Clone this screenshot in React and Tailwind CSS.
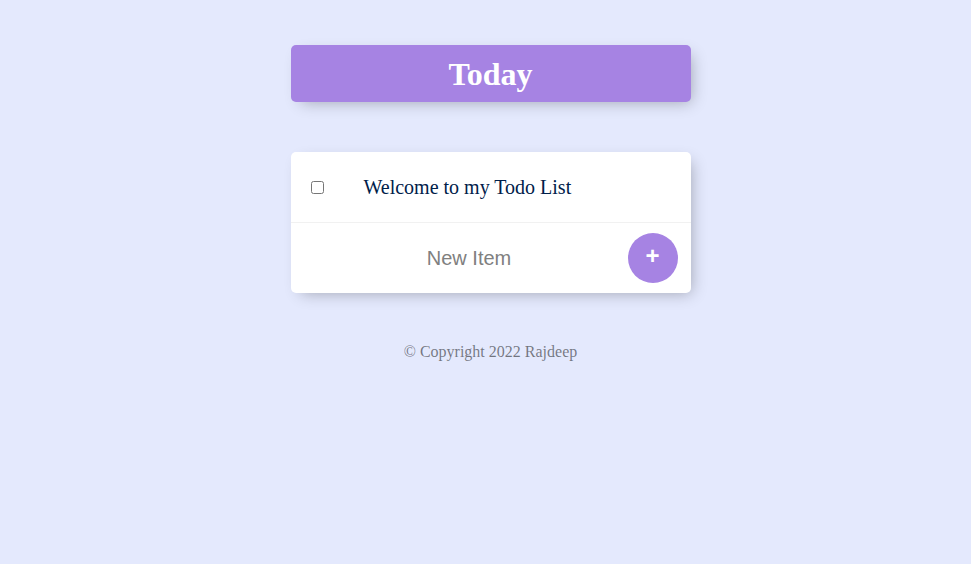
export default function App() {
  return (
    <div className="min-h-[564px] w-full bg-[#e4e9fd] pl-[10px] pt-[45px] font-['Liberation_Serif',serif]">
      <div className="mx-auto w-[400px] rounded-[5px] bg-[#a683e3] text-center shadow-[5px_5px_15px_-5px_rgba(0,0,0,0.3)]">
        <h1 className="px-[10px] pt-[11px] pb-[9px] text-[32px] leading-[37px] font-bold text-white">Today</h1>
      </div>

      <div className="mx-auto mt-[50px] w-[400px] rounded-[5px] bg-white shadow-[5px_5px_15px_-5px_rgba(0,0,0,0.3)]">
        <div className="flex h-[71px] items-center border-b border-[#f1f1f1]">
          <input type="checkbox" className="m-[20px] h-[13px] w-[13px]" />
          <p className="p-[20px] text-[20px] leading-[23px] text-[#00204a]">Welcome to my Todo List</p>
        </div>
        <div className="flex h-[70px] items-center pl-[20px]">
          <input
            type="text"
            placeholder="New Item"
            className="h-[60px] w-[313px] border-none pl-[4px] text-center font-['Liberation_Sans',sans-serif] text-[20px] outline-none placeholder:text-[grey]"
          />
          <button className="ml-[4px] flex h-[50px] w-[50px] items-center justify-center rounded-full bg-[#a683e3] pb-[5px] font-['Liberation_Sans',sans-serif] text-[24px] font-bold leading-none text-white">
            +
          </button>
        </div>
      </div>

      <footer className="mt-[50px] text-center text-[16px] leading-[18px] text-black/50">
        © Copyright 2022 Rajdeep
      </footer>
    </div>
  );
}
